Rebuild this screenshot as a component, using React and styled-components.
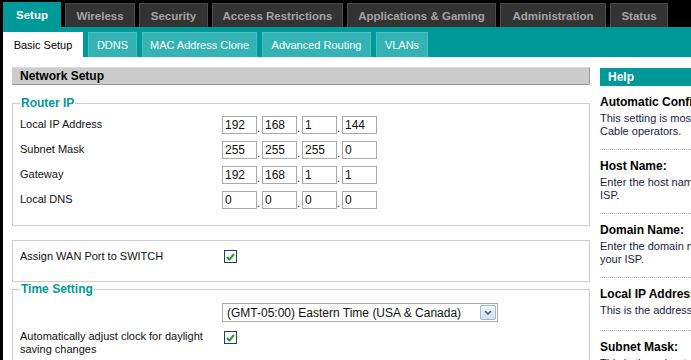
import styled, { createGlobalStyle } from "styled-components";

const GlobalStyle = createGlobalStyle`
  html, body {
    margin: 0;
    padding: 0;
    background: #000;
    overflow: hidden;
  }
  body {
    font-family: "Liberation Sans", Arial, sans-serif;
    font-size: 11px;
    color: #111;
  }
`;

const Page = styled.div`
  width: 900px;
  padding-left: 3px;
`;

const TopBar = styled.ul`
  list-style: none;
  margin: 0;
  padding: 3px 0 0;
  height: 27px;
  box-sizing: border-box;
  display: flex;
  gap: 4px;
`;

const TopTab = styled.li`
  width: ${(p) => p.$w}px;
  box-sizing: border-box;
  display: flex;
  align-items: center;
  justify-content: center;
  font-size: 11.5px;
  font-weight: bold;
  color: ${(p) => (p.$active ? "#fff" : "#a3a3a3")};
  background: ${(p) => (p.$active ? "#009999" : "#333")};
  border: 1px solid ${(p) => (p.$active ? "#009999" : "#4a4a4a")};
  border-bottom: none;
  margin-top: ${(p) => (p.$active ? "-1px" : "0")};
`;

const SubBar = styled.ul`
  list-style: none;
  margin: 0;
  padding: 5px 0 0;
  height: 30px;
  box-sizing: border-box;
  background: #009999;
  display: flex;
  gap: 5px;
`;

const SubTab = styled.li`
  width: ${(p) => p.$w}px;
  box-sizing: border-box;
  display: flex;
  align-items: center;
  justify-content: center;
  font-size: 11px;
  color: ${(p) => (p.$active ? "#000" : "#fff")};
  background: ${(p) => (p.$active ? "#fff" : "#33b3b3")};
  border: 1px solid ${(p) => (p.$active ? "#fff" : "#4cc0c0")};
  border-bottom: none;
`;

const Content = styled.div`
  background: #fff;
  display: flex;
  height: 400px;
`;

const Main = styled.div`
  width: 578px;
  margin-left: 9px;
  padding-top: 10px;
`;

const SectionHeader = styled.div`
  height: 18px;
  box-sizing: border-box;
  background: #ccc;
  border-top: 1px solid #ddd;
  border-right: 1px solid #999;
  border-bottom: 1px solid #999;
  padding-left: 8px;
  font-size: 12px;
  font-weight: bold;
  line-height: 16px;
  color: #000;
`;

const Fieldset = styled.fieldset`
  margin: ${(p) => p.$top}px 0 0;
  padding: ${(p) => p.$pt}px 7px ${(p) => p.$bottom}px;
  border: 1px solid #ccc;
  min-width: 0;
`;

const Legend = styled.legend`
  padding: 0 1px;
  font-size: 12px;
  font-weight: bold;
  line-height: 14px;
  color: #009999;
`;

const Box = styled.div`
  margin-top: 14px;
  border: 1px solid #ccc;
  padding: 3px 7px 12px;
`;

const Row = styled.div`
  display: grid;
  grid-template-columns: 202px 1fr;
  align-items: ${(p) => (p.$top ? "start" : "center")};
  min-height: 25px;
  padding-top: ${(p) => p.$pad || 0}px;
`;

const Label = styled.div`
  line-height: 13px;
`;

const IpGroup = styled.div`
  display: flex;
  align-items: flex-end;
`;

const IpInput = styled.div`
  width: 35px;
  height: 18px;
  box-sizing: border-box;
  border: 1px solid #a8a8a8;
  padding-left: 2px;
  font-size: 12px;
  line-height: 16px;
  color: #111;
`;

const Dot = styled.span`
  width: 5px;
  font-size: 11px;
  line-height: 12px;
`;

const Check = styled.span`
  display: inline-flex;
  width: 13px;
  height: 13px;
  box-sizing: border-box;
  border: 1px solid #1f3f5f;
  background: #fff;
  align-items: center;
  justify-content: center;
  margin-left: 2px;
  margin-top: ${(p) => p.$mt || 0}px;
`;

const Select = styled.div`
  width: 276px;
  height: 19px;
  box-sizing: border-box;
  border: 1px solid #a8a8a8;
  display: flex;
  align-items: center;
  justify-content: space-between;
  padding: 0 1px 0 4px;
  font-size: 12px;
  color: #111;
`;

const SelectArrow = styled.span`
  width: 16px;
  height: 15px;
  box-sizing: border-box;
  border: 1px solid #a6b9d6;
  border-radius: 2px;
  background: linear-gradient(#eef3fb, #d4e1f3);
  display: flex;
  align-items: center;
  justify-content: center;
`;

const Help = styled.div`
  width: 215px;
  margin-left: 10px;
  padding-top: 11px;
`;

const HelpHeader = styled.div`
  height: 18px;
  background: #009999;
  color: #fff;
  font-size: 12px;
  font-weight: bold;
  line-height: 18px;
  padding-left: 8px;
`;

const HelpItem = styled.div`
  padding: ${(p) => (p.$first ? 9 : 9)}px 0 ${(p) => (p.$single ? 13 : 11)}px;
  border-bottom: 1px dotted #aaa;
`;

const HelpTitle = styled.div`
  font-size: 12px;
  font-weight: bold;
  line-height: 14px;
  color: #000;
  margin-bottom: 3px;
  white-space: nowrap;
`;

const HelpText = styled.div`
  line-height: 13px;
  color: #1a1a4a;
  white-space: nowrap;
`;

const topTabs = [
  ["Setup", 58],
  ["Wireless", 70],
  ["Security", 69],
  ["Access Restrictions", 131],
  ["Applications & Gaming", 149],
  ["Administration", 106],
  ["Status", 58],
];

const subTabs = [
  ["Basic Setup", 80],
  ["DDNS", 49],
  ["MAC Address Clone", 115],
  ["Advanced Routing", 109],
  ["VLANs", 52],
];

const ipRows = [
  ["Local IP Address", ["192", "168", "1", "144"]],
  ["Subnet Mask", ["255", "255", "255", "0"]],
  ["Gateway", ["192", "168", "1", "1"]],
  ["Local DNS", ["0", "0", "0", "0"]],
];

const helpItems = [
  ["Automatic Configuration - DHCP:", ["This setting is most commonly used by", "Cable operators."]],
  ["Host Name:", ["Enter the host name provided by your", "ISP."]],
  ["Domain Name:", ["Enter the domain name provided by", "your ISP."]],
  ["Local IP Address:", ["This is the address of the router."]],
  ["Subnet Mask:", ["This is the subnet mask of the router."]],
];

const CheckMark = ({ mt }) => (
  <Check $mt={mt}>
    <svg width="9" height="8" viewBox="0 0 9 8">
      <path d="M1 4 L3.5 6.5 L8 1" fill="none" stroke="#22a022" strokeWidth="2" />
    </svg>
  </Check>
);

const IpField = ({ parts }) => (
  <IpGroup>
    {parts.map((v, i) => (
      <>
        {i > 0 && <Dot>.</Dot>}
        <IpInput>{v}</IpInput>
      </>
    ))}
  </IpGroup>
);

export default function App() {
  return (
    <>
      <GlobalStyle />
      <Page>
        <TopBar>
          {topTabs.map(([t, w], i) => (
            <TopTab key={t} $w={w} $active={i === 0}>
              {t}
            </TopTab>
          ))}
        </TopBar>
        <SubBar>
          {subTabs.map(([t, w], i) => (
            <SubTab key={t} $w={w} $active={i === 0}>
              {t}
            </SubTab>
          ))}
        </SubBar>
        <Content>
          <Main>
            <SectionHeader>Network Setup</SectionHeader>
            <Fieldset $top={11} $pt={2} $bottom={13}>
              <Legend>Router IP</Legend>
              {ipRows.map(([label, parts]) => (
                <Row key={label}>
                  <Label>{label}</Label>
                  <IpField parts={parts} />
                </Row>
              ))}
            </Fieldset>
            <Box>
              <Row>
                <Label>Assign WAN Port to SWITCH</Label>
                <CheckMark />
              </Row>
            </Box>
            <Fieldset $top={0} $pt={0} $bottom={10}>
              <Legend>Time Setting</Legend>
              <Row $pad={4}>
                <span />
                <Select>
                  (GMT-05:00) Eastern Time (USA &amp; Canada)
                  <SelectArrow>
                    <svg width="8" height="5" viewBox="0 0 8 5">
                      <path d="M1 1 L4 4 L7 1" fill="none" stroke="#4d5b6e" strokeWidth="1.6" />
                    </svg>
                  </SelectArrow>
                </Select>
              </Row>
              <Row $top $pad={5}>
                <Label>
                  Automatically adjust clock for daylight
                  <br />
                  saving changes
                </Label>
                <CheckMark mt={1} />
              </Row>
            </Fieldset>
          </Main>
          <Help>
            <HelpHeader>Help</HelpHeader>
            {helpItems.map(([title, lines], i) => (
              <HelpItem key={title} $first={i === 0} $single={lines.length === 1}>
                <HelpTitle>{title}</HelpTitle>
                {lines.map((l) => (
                  <HelpText key={l}>{l}</HelpText>
                ))}
              </HelpItem>
            ))}
          </Help>
        </Content>
      </Page>
    </>
  );
}
